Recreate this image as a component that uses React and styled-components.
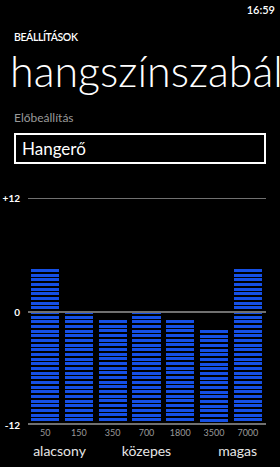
import React from 'react'
import styled, { createGlobalStyle } from 'styled-components'

const BANDS = [
  { freq: '50', value: 4.5 },
  { freq: '150', value: 0 },
  { freq: '350', value: -1 },
  { freq: '700', value: 0 },
  { freq: '1800', value: -1 },
  { freq: '3500', value: -2 },
  { freq: '7000', value: 4.5 },
]

const GlobalStyle = createGlobalStyle`
  html, body {
    margin: 0;
    padding: 0;
    background: #000;
  }
  body {
    font-family: Lato, 'Open Sans', sans-serif;
    color: #fff;
  }
`

const Screen = styled.div`
  width: 280px;
  height: 467px;
  overflow: hidden;
  background: #000;
`

const StatusBar = styled.div`
  display: flex;
  justify-content: flex-end;
  height: 20px;
  padding-right: 5px;
  font-size: 11px;
  font-weight: 600;
  line-height: 20px;
`

const Section = styled.div`
  padding: 0 14px;
`

const PageName = styled.div`
  margin-top: 10px;
  font-size: 10.5px;
  font-weight: 600;
  letter-spacing: -0.4px;
  line-height: 15px;
`

const Title = styled.div`
  margin-left: -4px;
  margin-right: -14px;
  font-size: 43px;
  font-weight: 300;
  line-height: 52px;
  white-space: nowrap;
  overflow: hidden;
`

const FieldLabel = styled.div`
  margin-top: 13px;
  font-size: 12px;
  color: #9a9a9a;
  line-height: 16px;
`

const Picker = styled.div`
  margin-top: 7px;
  height: 27px;
  border: 2px solid #fff;
  padding: 0 6px;
  font-size: 17px;
  line-height: 27px;
`

const Chart = styled.div`
  display: grid;
  grid-template-columns: 28px 238px;
  margin-top: 34px;
`

const Axis = styled.div`
  display: flex;
  flex-direction: column;
  justify-content: space-between;
  align-items: flex-end;
  padding-right: 8px;
  font-size: 10px;
  font-weight: 700;
`

const Tick = styled.div`
  height: 0;
  display: flex;
  align-items: center;
`

const Plot = styled.div`
  position: relative;
  height: 224px;
  border-top: 1px solid #707070;
  border-bottom: 2px solid #707070;
  display: grid;
  grid-template-columns: repeat(7, 1fr);
  column-gap: 5.5px;
  align-items: end;
  padding: 0 4px 0 3px;
`

const ZeroLine = styled.div`
  position: absolute;
  left: 0;
  right: 0;
  top: 112px;
  height: 2px;
  background: #707070;
`

const Bar = styled.div`
  background: repeating-linear-gradient(
    to bottom,
    #1550e6 0,
    #1550e6 3px,
    transparent 3px,
    transparent 4.667px
  );
`

const Freqs = styled.div`
  display: grid;
  grid-template-columns: repeat(7, 1fr);
  column-gap: 5.5px;
  margin-left: 28px;
  width: 238px;
  box-sizing: border-box;
  padding: 0 4px 0 3px;
  margin-top: 2px;
  font-size: 9px;
  color: #9a9a9a;
  text-align: center;
  line-height: 12px;
`

const Ranges = styled.div`
  display: grid;
  grid-template-columns: repeat(7, 1fr);
  column-gap: 5.5px;
  margin-left: 28px;
  width: 238px;
  box-sizing: border-box;
  padding: 0 4px 0 3px;
  margin-top: 3px;
  font-size: 14px;
  color: #e6e6e6;
  line-height: 18px;
`

const Range = styled.div`
  grid-column: ${p => p.span};
  justify-self: ${p => p.align};
  margin-right: ${p => (p.align === 'end' ? '5px' : 0)};
  margin-left: ${p => (p.align === 'center' ? '-5px' : 0)};
`

const Mid = styled.div`
  grid-column: 4;
  justify-self: center;
  white-space: nowrap;
  display: flex;
  justify-content: center;
  width: 0;
`

export default function App() {
  return (
    <Screen>
      <GlobalStyle />
      <StatusBar>16:59</StatusBar>
      <Section>
        <PageName>BEÁLLÍTÁSOK</PageName>
        <Title>hangszínszabályzó</Title>
        <FieldLabel>Előbeállítás</FieldLabel>
        <Picker>Hangerő</Picker>
      </Section>
      <Chart>
        <Axis>
          <Tick>+12</Tick>
          <Tick>0</Tick>
          <Tick>-12</Tick>
        </Axis>
        <Plot>
          {BANDS.map(b => (
            <Bar key={b.freq} style={{ height: `${((b.value + 12) / 24) * 224}px` }} />
          ))}
          <ZeroLine />
        </Plot>
      </Chart>
      <Freqs>
        {BANDS.map(b => (
          <div key={b.freq}>{b.freq}</div>
        ))}
      </Freqs>
      <Ranges>
        <Range span="1 / 3" align="center">alacsony</Range>
        <Mid>közepes</Mid>
        <Range span="6 / 8" align="end">magas</Range>
      </Ranges>
    </Screen>
  )
}
